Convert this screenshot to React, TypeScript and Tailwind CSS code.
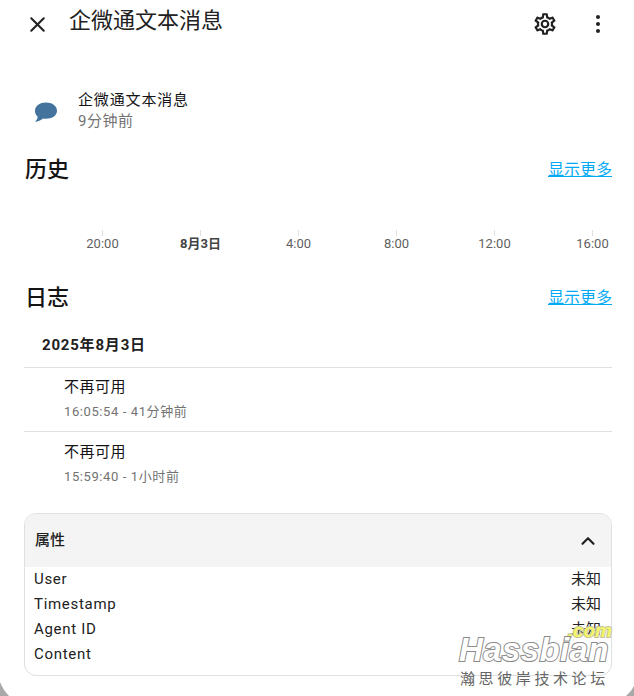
import { X, ChevronUp } from 'lucide-react';

const ticks = [
  { label: '20:00', bold: false },
  { label: '8月3日', bold: true },
  { label: '4:00', bold: false },
  { label: '8:00', bold: false },
  { label: '12:00', bold: false },
  { label: '16:00', bold: false },
];

const logEntries = [
  { title: '不再可用', time: '16:05:54 - 41分钟前' },
  { title: '不再可用', time: '15:59:40 - 1小时前' },
];

const attributes = ['User', 'Timestamp', 'Agent ID'];

const fontStack = "font-['Roboto','Noto_Sans_CJK_SC',sans-serif]";

function SectionHeader({ title }: { title: string }) {
  return (
    <div className="flex items-center justify-between pl-[25px] pr-[22px]">
      <h2 className="text-[22px] leading-7 font-medium text-[#141414]">{title}</h2>
      <a className="text-base leading-5 text-[#03a9f4] underline">显示更多</a>
    </div>
  );
}

export default function App() {
  return (
    <div className={`relative h-[696px] w-[634px] overflow-hidden bg-white ${fontStack}`}>
      {/* Header */}
      <div className="flex h-[48px] items-start pl-[25px] pr-[24px]">
        <X size={25} strokeWidth={2} className="mt-[12px] text-[#212121]" />
        <h1 className="ml-[19px] mt-[7px] text-[22px] leading-7 font-normal text-[#212121]">企微通文本消息</h1>
        <div className="ml-auto mt-[12px] flex items-center gap-[28px] text-[#212121]">
          <svg width="26" height="26" viewBox="0 0 24 24" fill="currentColor" className="-my-px">
            <path d="M12,8A4,4 0 0,1 16,12A4,4 0 0,1 12,16A4,4 0 0,1 8,12A4,4 0 0,1 12,8M12,10A2,2 0 0,0 10,12A2,2 0 0,0 12,14A2,2 0 0,0 14,12A2,2 0 0,0 12,10M10,22C9.75,22 9.54,21.82 9.5,21.58L9.13,18.93C8.5,18.68 7.96,18.34 7.44,17.94L4.95,18.95C4.73,19.03 4.46,18.95 4.34,18.73L2.34,15.27C2.21,15.05 2.27,14.78 2.46,14.63L4.57,12.97L4.5,12L4.57,11L2.46,9.37C2.27,9.22 2.21,8.95 2.34,8.73L4.34,5.27C4.46,5.05 4.73,4.96 4.95,5.05L7.44,6.05C7.96,5.66 8.5,5.32 9.13,5.07L9.5,2.42C9.54,2.18 9.75,2 10,2H14C14.25,2 14.46,2.18 14.5,2.42L14.87,5.07C15.5,5.32 16.04,5.66 16.56,6.05L19.05,5.05C19.27,4.96 19.54,5.05 19.66,5.27L21.66,8.73C21.79,8.95 21.73,9.22 21.54,9.37L19.43,11L19.5,12L19.43,13L21.54,14.63C21.73,14.78 21.79,15.05 21.66,15.27L19.66,18.73C19.54,18.95 19.27,19.04 19.05,18.95L16.56,17.95C16.04,18.34 15.5,18.68 14.87,18.93L14.5,21.58C14.46,21.82 14.25,22 14,22H10M11.25,4L10.88,6.61C9.68,6.86 8.62,7.5 7.85,8.39L5.44,7.35L4.69,8.65L6.8,10.2C6.4,11.37 6.4,12.64 6.8,13.8L4.68,15.36L5.43,16.66L7.86,15.62C8.63,16.5 9.68,17.14 10.87,17.38L11.24,20H12.76L13.13,17.39C14.32,17.14 15.37,16.5 16.14,15.62L18.57,16.66L19.32,15.36L17.2,13.81C17.6,12.64 17.6,11.37 17.2,10.2L19.31,8.65L18.56,7.35L16.15,8.39C15.38,7.5 14.32,6.86 13.12,6.62L12.75,4H11.25Z" />
          </svg>
          <svg width="24" height="24" viewBox="0 0 24 24" fill="currentColor">
            <circle cx="12" cy="5" r="2" />
            <circle cx="12" cy="12" r="2" />
            <circle cx="12" cy="19" r="2" />
          </svg>
        </div>
      </div>

      {/* State */}
      <div className="mt-[41px] flex items-center pl-[34px]">
        <svg width="24" height="24" viewBox="0 0 24 24" fill="#44739e" className="mt-[4px]">
          <path d="M12 2.5c6 0 11 3.2 11 8.300 0 5-5 8-11 8-1 0-2 0-3-.3C7 20.300 4 21.500 1 21.800c1.400-1.300 2.500-3 2.700-5C2 15.300 1 13.300 1 10.800 1 5.700 6 2.500 12 2.500z" />
        </svg>
        <div className="ml-[20px] text-[15px]">
          <div className="leading-[22px] tracking-[0.85px] text-[#141414]">企微通文本消息</div>
          <div className="leading-[20px] tracking-[0.5px] text-[#727272]">9分钟前</div>
        </div>
      </div>

      {/* History */}
      <div className="mt-[25px]">
        <SectionHeader title="历史" />
        <div className="mt-[46px] h-[23px]">
          <div className="ml-[75px] grid w-[588px] grid-cols-6">
            {ticks.map((tick) => (
              <div key={tick.label} className="flex w-[55px] flex-col items-center">
                <div className="h-[6px] w-px bg-[#e0e0e0]" />
                <span className={`-mt-px whitespace-nowrap text-[13px] leading-[18px] ${tick.bold ? 'font-bold text-[#444]' : 'text-[#5f5f5f]'}`}>
                  {tick.label}
                </span>
              </div>
            ))}
          </div>
        </div>
      </div>

      {/* Logbook */}
      <div className="mt-[31px]">
        <SectionHeader title="日志" />
        <div className="ml-[24px] mr-[22px] mt-[23px]">
          <div className="border-b border-[#e0e0e0] pb-[12px] pl-[18px] text-[15px] leading-5 font-bold tracking-[0.8px] text-[#212121]">
            2025年8月3日
          </div>
          {logEntries.map((entry, i) => (
            <div key={entry.time} className={`h-[64px] pl-[40px] ${i === 0 ? 'border-b border-[#e0e0e0] pt-[9px]' : 'pt-[10px]'}`}>
              <div className="text-[15px] leading-5 tracking-[0.5px] text-[#141414]">{entry.title}</div>
              <div className="mt-[5px] text-[13px] leading-5 tracking-[0.6px] text-[#727272]">{entry.time}</div>
            </div>
          ))}
        </div>
      </div>

      {/* Attributes */}
      <div className="ml-[24px] mr-[22px] mt-[17px] h-[163px] overflow-hidden rounded-xl border border-[#e0e0e0]">
        <div className="flex h-[53px] items-start justify-between bg-[#f4f4f4] pl-[10px] pr-[12px] pt-[16px]">
          <span className="text-[15px] leading-5 font-medium text-[#212121]">属性</span>
          <ChevronUp size={22} strokeWidth={2.4} className="text-[#212121]" />
        </div>
        <div className="pl-[9px] pr-[10px] text-[15px] tracking-[0.7px]">
          {attributes.map((name) => (
            <div key={name} className="flex h-[25px] items-center justify-between text-[#212121]">
              <span>{name}</span>
              <span className="tracking-normal">未知</span>
            </div>
          ))}
          <div className="flex h-[24px] items-center text-[#212121]">Content</div>
        </div>
      </div>

      {/* Watermark */}
      <div className="absolute bottom-[7px] left-[459px] w-[155px]">
        <div className="absolute right-[2px] top-[-11px] text-[19px] leading-5 font-bold italic text-[#f5f56a] [-webkit-text-stroke:2px_#c4c4a0] [paint-order:stroke_fill] font-['Liberation_Sans',sans-serif]">.com</div>
        <div className="relative whitespace-nowrap text-[33px] leading-9 font-bold italic tracking-[0.4px] text-white [-webkit-text-stroke:2px_#8a8a8a] [paint-order:stroke_fill] font-['Liberation_Sans',sans-serif]">Hassbian</div>
        <div className="relative ml-px mt-[1px] whitespace-nowrap text-[15px] leading-5 tracking-[3.6px] text-[#666]">瀚思彼岸技术论坛</div>
      </div>

      {/* Window corners showing behind the dialog */}
      <svg width="10" height="14" viewBox="0 0 10 14" className="absolute bottom-0 left-0" fill="#a9a9a9">
        <path d="M0 0C2 5 5 10 9 14H0z" />
      </svg>
      <svg width="8" height="10" viewBox="0 0 8 10" className="absolute bottom-0 right-0" fill="#a9a9a9">
        <path d="M8 0C6 4 3 7 0 10H8z" />
      </svg>
    </div>
  );
}
